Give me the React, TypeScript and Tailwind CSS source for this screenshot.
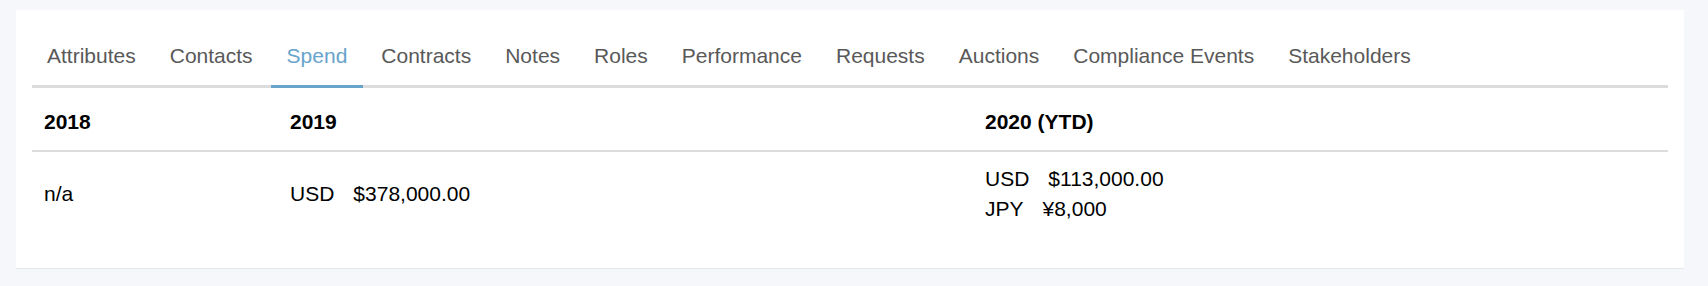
import { useState } from "react";

const tabs = [
  "Attributes",
  "Contacts",
  "Spend",
  "Contracts",
  "Notes",
  "Roles",
  "Performance",
  "Requests",
  "Auctions",
  "Compliance Events",
  "Stakeholders",
];

const App = () => {
  const [active, setActive] = useState("Spend");

  return (
    <div
      className="min-h-[286px] w-full bg-[#f6f7fb] pt-[10px] pl-4 pr-6"
      style={{ fontFamily: '"Liberation Sans", Arial, sans-serif' }}
    >
      <div className="border-b border-[#e6e7eb] bg-white px-4 pt-[34px] pb-[33px]">
        <ul className="flex gap-[2px] border-b-[3px] border-[#dcdcdc]">
          {tabs.map((tab, i) => (
            <li
              key={tab}
              onClick={() => setActive(tab)}
              className={
                (i === 0 ? "-ml-px " : "") +
                (tab === active
                  ? "-mb-[3px] cursor-pointer border-b-[3px] border-[#67a3cb] px-4 pb-[17px] text-[21px] leading-6 text-[#67a3cb]"
                  : "cursor-pointer px-4 pb-[17px] text-[21px] leading-6 text-[#595959]")
              }
            >
              {tab}
            </li>
          ))}
        </ul>

        <div className="grid grid-cols-[246px_1fr_1fr] border-b-2 border-[#dcdcdc] pt-[19px] pb-[13px] text-[21px] leading-[30px] font-bold text-black">
          <div className="pl-3">2018</div>
          <div className="pl-3">2019</div>
          <div className="pl-3">2020 (YTD)</div>
        </div>

        <div className="grid grid-cols-[246px_1fr_1fr] items-center py-3 text-[21px] leading-[29.5px] text-black">
          <div className="pl-3">n/a</div>
          <div className="pl-3">
            <span className="mr-[19px]">USD</span>$378,000.00
          </div>
          <div className="pl-3">
            <div>
              <span className="mr-[19px]">USD</span>$113,000.00
            </div>
            <div>
              <span className="mr-[19px]">JPY</span>¥8,000
            </div>
          </div>
        </div>
      </div>
    </div>
  );
};

export default App;
